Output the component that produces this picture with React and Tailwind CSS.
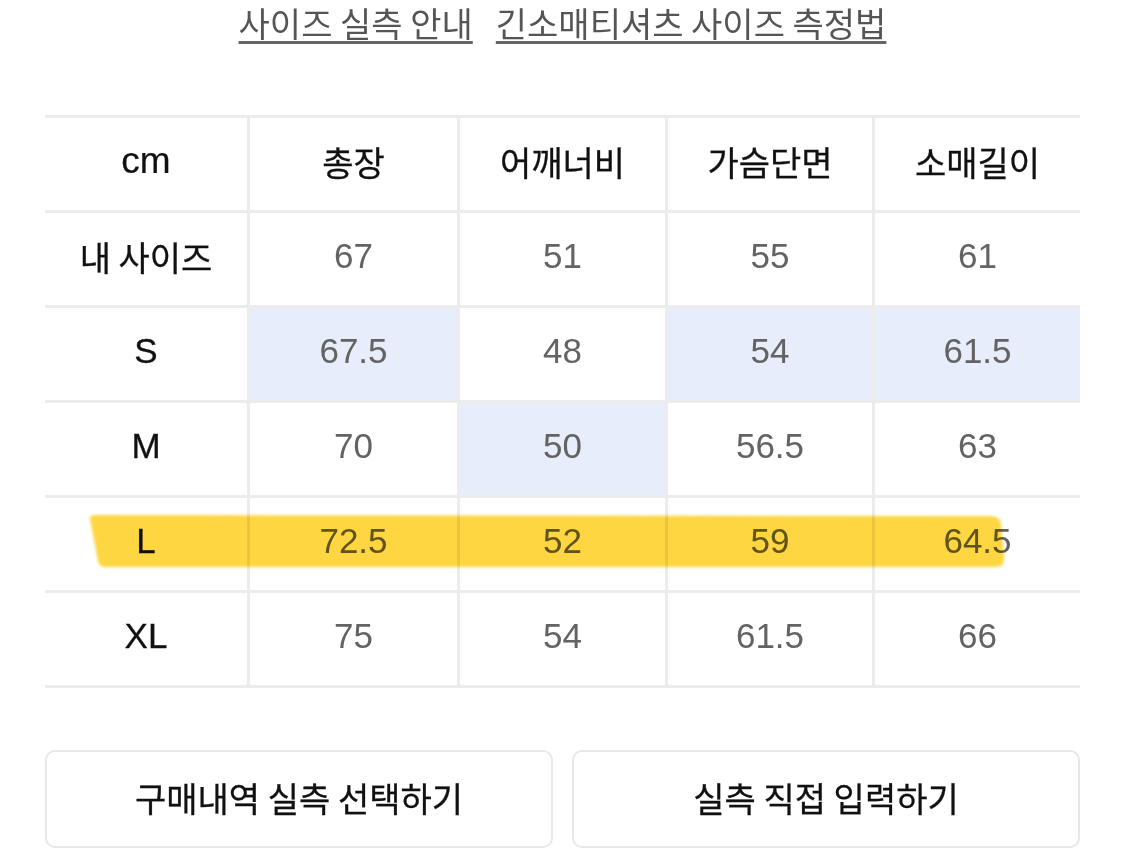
import React from "react";

const font = { fontFamily: '"Liberation Sans", "Noto Sans CJK KR", sans-serif' };
const kfont = { fontFamily: '"Noto Sans CJK KR", "Liberation Sans", sans-serif' };

const header = ["총장", "어깨너비", "가슴단면", "소매길이"];
const rows = [
  { label: "내 사이즈", vals: ["67", "51", "55", "61"], blue: [] },
  { label: "S", vals: ["67.5", "48", "54", "61.5"], blue: [0, 2, 3] },
  { label: "M", vals: ["70", "50", "56.5", "63"], blue: [1] },
  { label: "L", vals: ["72.5", "52", "59", "64.5"], blue: [] },
  { label: "XL", vals: ["75", "54", "61.5", "66"], blue: [] },
];

export default function App() {
  return (
    <div className="w-[1125px] h-[859px] bg-white overflow-hidden relative" style={font}>
      <div className="flex justify-center gap-[23px] h-[48px] pt-[1px] items-start" style={kfont}>
        <span className="text-[34px] leading-[44px] text-[#555] underline decoration-[3px] underline-offset-[4px] decoration-[#666]">사이즈 실측 안내</span>
        <span className="text-[34px] leading-[44px] text-[#555] underline decoration-[3px] underline-offset-[4px] decoration-[#666]">긴소매티셔츠 사이즈 측정법</span>
      </div>

      <div className="mx-[45px] mt-[67px] w-[1035px] grid grid-cols-[202px_210px_208px_207px_208px] border-t-[3px] border-[#ececec]">
        <div className="h-[95px] pb-[6px] flex items-center justify-center border-b-[3px] border-[#ececec] text-[37px] text-[#111] [-webkit-text-stroke:0.2px_#111]">cm</div>
        {header.map((h) => (
          <div key={h} className="h-[95px] pb-[6px] flex items-center justify-center border-b-[3px] border-l-[3px] border-[#ececec] text-[34px] text-[#111] [-webkit-text-stroke:0.3px_#111]" style={kfont}>
            {h}
          </div>
        ))}
        {rows.map((r) => (
          <React.Fragment key={r.label}>
            <div
              className={
                "h-[95px] pb-[6px] flex items-center justify-center border-b-[3px] border-[#ececec] text-[#111] " +
                (r.label === "내 사이즈" ? "text-[34px] [-webkit-text-stroke:0.3px_#111]" : "text-[35px] [-webkit-text-stroke:0.3px_#111]")
              }
              style={r.label === "내 사이즈" ? kfont : font}
            >
              {r.label}
            </div>
            {r.vals.map((v, i) => (
              <div
                key={i}
                className={
                  "h-[95px] pb-[6px] flex items-center justify-center border-b-[3px] border-l-[3px] border-[#ececec] text-[35px] text-[#636363] " +
                  (r.blue.includes(i) ? "bg-[#e8edfc]" : "bg-white")
                }
              >
                {v}
              </div>
            ))}
          </React.Fragment>
        ))}
      </div>

      <svg className="absolute left-0 top-0 pointer-events-none mix-blend-multiply" width="1125" height="859">
        <defs>
          <filter id="soft" x="-5%" y="-30%" width="110%" height="160%">
            <feGaussianBlur stdDeviation="1.5" />
          </filter>
        </defs>
        <path
          d="M90 519 Q89 515 95 515 L990 516 Q1000 516 1001 524 L1004 558 Q1005 567 995 567 L106 567 Q99 567 98 561 Z"
          fill="#fdd333"
          opacity="0.92"
          filter="url(#soft)"
        />
      </svg>

      <div className="mx-[45px] mt-[62px] flex gap-[19px]" style={kfont}>
        <button className="w-[508px] h-[98px] pb-[4px] rounded-[10px] border-2 border-[#e8e8e8] bg-white text-[34px] text-[#111] [-webkit-text-stroke:0.3px_#111] flex items-center justify-center">
          구매내역 실측 선택하기
        </button>
        <button className="w-[508px] h-[98px] pb-[4px] rounded-[10px] border-2 border-[#e8e8e8] bg-white text-[34px] text-[#111] [-webkit-text-stroke:0.3px_#111] flex items-center justify-center">
          실측 직접 입력하기
        </button>
      </div>
    </div>
  );
}
